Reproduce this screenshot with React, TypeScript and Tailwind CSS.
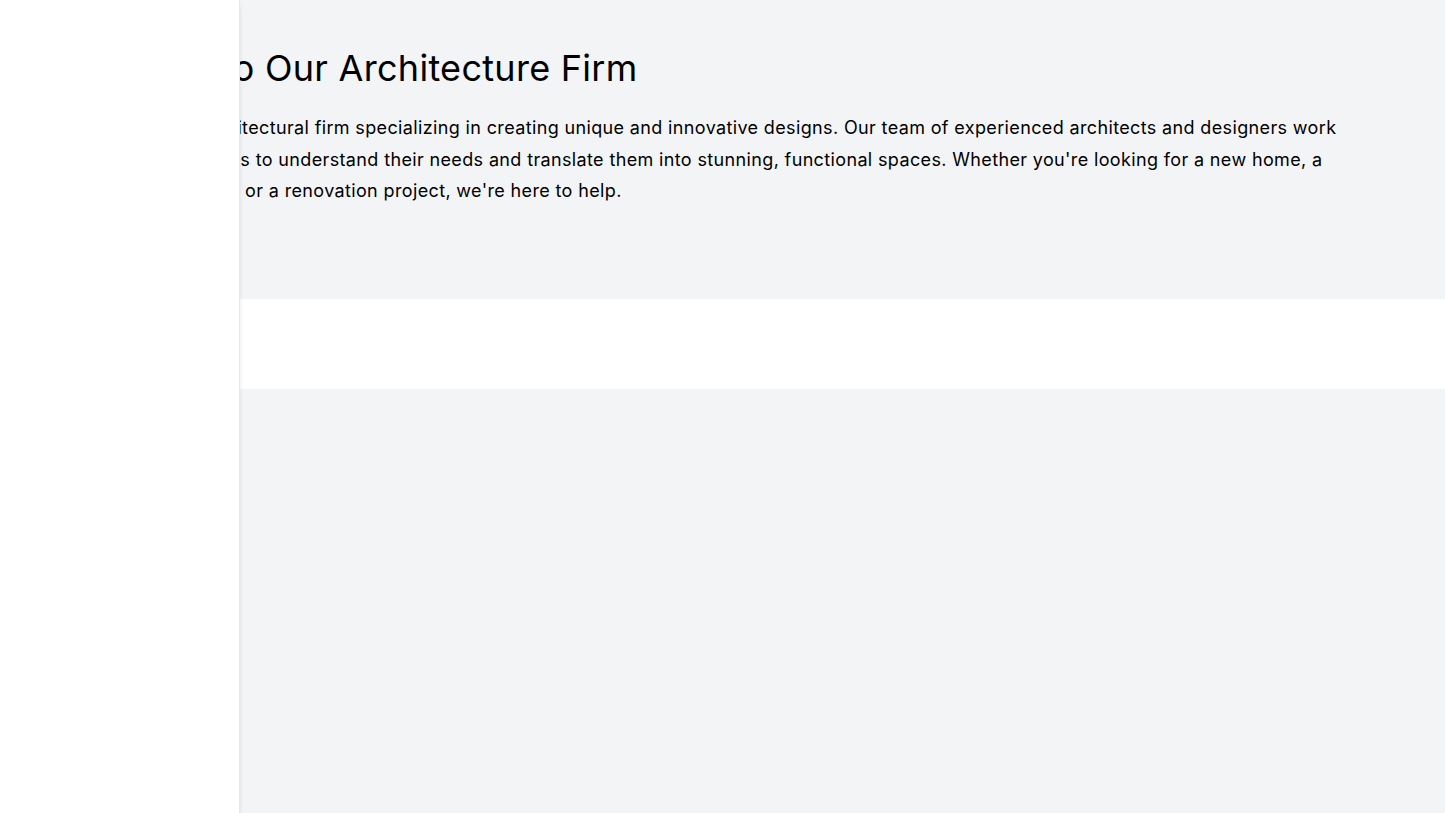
export default function App() {
  return (
    <div className="min-h-screen bg-gray-100 font-['Inter',sans-serif] text-black">
      <aside className="fixed left-0 top-0 h-screen w-60 border-r border-gray-200 bg-white shadow-md" />

      <section className="pt-12 pb-[92px]">
        <div className="container mx-auto px-4">
          <h1 className="-ml-[48px] mb-6 text-4xl tracking-[0.008em]">Welcome to Our Architecture Firm</h1>
          <p className="ml-[6px] text-lg leading-[1.75] tracking-[0.02em]">
            We are an architectural firm specializing in creating unique and innovative designs. Our team of experienced architects and designers work with their clients to understand their needs and translate them into stunning, functional spaces. Whether you're looking for a new home, a public building, or a renovation project, we're here to help.
          </p>
        </div>
      </section>

      <section className="h-[90px] bg-white" />
    </div>
  );
}
